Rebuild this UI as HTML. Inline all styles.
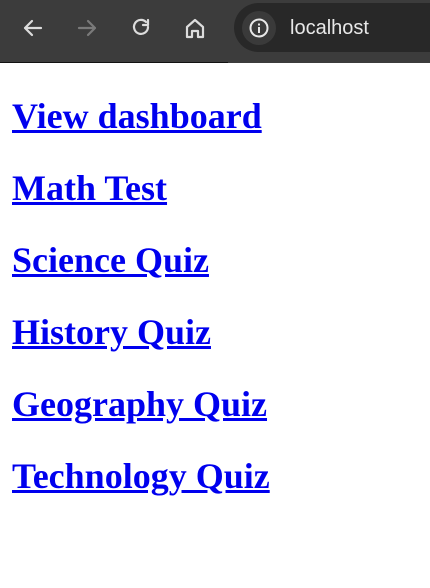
<!DOCTYPE html>
<html><head><style>
html,body{margin:0;padding:0;background:#fff;width:430px;height:588px;overflow:hidden}
.bar{position:absolute;left:0;top:0;width:430px;height:63px;background:#3c3c3c}
.line{position:absolute;left:0;top:62px;width:228px;height:1px;background:#111}
.addr{position:absolute;left:234px;top:3px;width:220px;height:49px;border-radius:25px;background:#282828}
.info{position:absolute;left:242px;top:11px;width:34px;height:34px;border-radius:50%;background:#3a3a3a}
.url{position:absolute;left:290px;top:17px;font:20px "Liberation Sans",sans-serif;color:#e8e8e8}
.c{position:absolute;left:12px;top:63px}
h2{font:bold 36px/41px "Liberation Serif",serif;margin:0 0 31px 0;white-space:nowrap}
h2:first-child{margin-top:33px}
a{color:#0000ee;text-decoration:underline}
</style></head><body>
<div class="bar"></div><div class="line"></div>
<svg style="position:absolute;left:0;top:0" width="230" height="60">
<g fill="none" stroke-width="2.2" stroke-linecap="round" stroke-linejoin="round">
<path d="M41 28H25M32 21l-7 7 7 7" stroke="#dcdcdc"/>
<path d="M79 28h16M88 21l7 7-7 7" stroke="#7a7a7a"/>
<path d="M148 27a7 7 0 1 1-2-5" stroke="#dcdcdc"/>
<path d="M148 20v5h-5" stroke="#dcdcdc"/>
<path d="M187 37V27l8-7 8 7v10h-5v-6h-6v6z" stroke="#dcdcdc"/>
</g></svg>
<div class="addr"></div><div class="info"></div>
<svg style="position:absolute;left:249px;top:18px" width="20" height="20"><circle cx="10" cy="10" r="8.5" fill="none" stroke="#e8e8e8" stroke-width="2"/><rect x="9" y="9" width="2" height="6" fill="#e8e8e8"/><rect x="9" y="5.5" width="2" height="2" fill="#e8e8e8"/></svg>
<div class="url">localhost</div>
<div class="c">
<h2><a>View dashboard</a></h2>
<h2><a>Math Test</a></h2>
<h2><a>Science Quiz</a></h2>
<h2><a>History Quiz</a></h2>
<h2><a>Geography Quiz</a></h2>
<h2><a>Technology Quiz</a></h2>
</div>
</body></html>
